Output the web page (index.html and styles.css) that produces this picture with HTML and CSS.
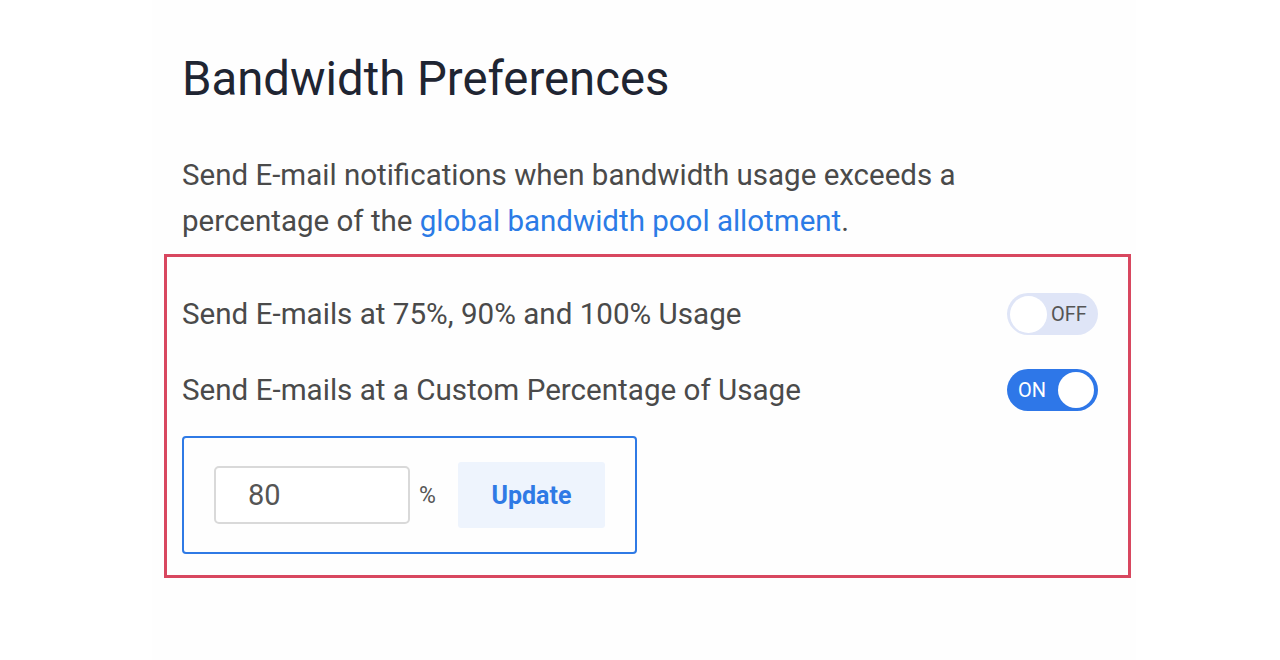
FILE: index.html
```html
<!DOCTYPE html>
<html lang="en">
<head>
    <meta charset="UTF-8">
    <meta name="viewport" content="width=device-width, initial-scale=1.0">
    <title>Bandwidth Preferences</title>
    <link rel="stylesheet" href="styles.css">
</head>
<body>
    <div class="page">
        <h1>Bandwidth Preferences</h1>

        <p class="intro">
            Send E-mail notifications when bandwidth usage exceeds a
            percentage of the <a href="#">global bandwidth pool allotment</a>.
        </p>

        <div class="notify-box">
            <div class="setting-row">
                <span>Send E-mails at 75%, 90% and 100% Usage</span>
                <label class="toggle">
                    <input type="checkbox">
                    <span class="track"><span class="state">OFF</span><span class="knob"></span></span>
                </label>
            </div>
            <div class="setting-row">
                <span>Send E-mails at a Custom Percentage of Usage</span>
                <label class="toggle">
                    <input type="checkbox" checked>
                    <span class="track"><span class="state">ON</span><span class="knob"></span></span>
                </label>
            </div>

            <form class="custom-form" id="custom-form">
                <input type="text" id="percent" value="80">
                <span class="unit">%</span>
                <button type="submit" class="btn-update">Update</button>
            </form>
        </div>
    </div>
</body>
</html>
```

FILE: styles.css
```css
* {
    margin: 0;
    padding: 0;
    box-sizing: border-box;
    font-family: 'Roboto', sans-serif;
}

body {
    background-color: #fff;
    color: #4a4a4a;
}

.page {
    width: 984px;
    margin-left: 152px;
    padding: 51px 0 60px 30px;
    background: #fefefe;
    min-height: 660px;
}

h1 {
    font-size: 47.3px;
    line-height: 57px;
    font-weight: 400;
    color: #1f2532;
}

.intro {
    margin-top: 44px;
    font-size: 29.5px;
    line-height: 46px;
    width: 800px;
}

.intro a {
    color: #2b7be6;
    text-decoration: none;
}

.notify-box {
    margin: 10px 0 0 -18px;
    width: 967px;
    border: 3px solid #d8475f;
    padding: 35px 30px 21px 15px;
}

.setting-row {
    display: flex;
    justify-content: space-between;
    align-items: center;
    font-size: 29.6px;
    height: 44px;
    margin-bottom: 32px;
}

.setting-row:nth-child(2) {
    margin-bottom: 24px;
}

.toggle input {
    display: none;
}

.toggle .track {
    display: flex;
    align-items: center;
    width: 91px;
    height: 42px;
    border-radius: 21px;
    background: #dfe5f7;
    padding: 0 3px;
    cursor: pointer;
}

.toggle .knob {
    width: 37px;
    height: 37px;
    border-radius: 50%;
    background: #fff;
    order: -1;
}

.toggle .state {
    font-size: 20px;
    color: #555;
    margin-left: 4px;
}

.toggle input:checked + .track {
    background: #2e77e8;
    justify-content: space-between;
    padding: 0 4px 0 11px;
}

.toggle input:checked + .track .knob {
    order: 1;
    width: 36px;
    height: 36px;
}

.toggle input:checked + .track .state {
    color: #fff;
    margin: 0;
}

.custom-form {
    display: flex;
    align-items: center;
    width: 455px;
    height: 118px;
    border: 2px solid #2f7ae5;
    border-radius: 4px;
    padding: 0 30px;
}

.custom-form input {
    width: 196px;
    height: 58px;
    border: 2px solid #d9d9d9;
    border-radius: 5px;
    padding: 0 32px;
    font-size: 29px;
    color: #555;
    outline: none;
}

.unit {
    margin: 0 22px 0 9px;
    font-size: 23px;
    color: #555;
}

.btn-update {
    width: 148px;
    height: 66px;
    border: none;
    border-radius: 3px;
    background: #eef4fd;
    color: #2f7ae5;
    font-size: 25px;
    font-weight: 700;
    cursor: pointer;
}
```
